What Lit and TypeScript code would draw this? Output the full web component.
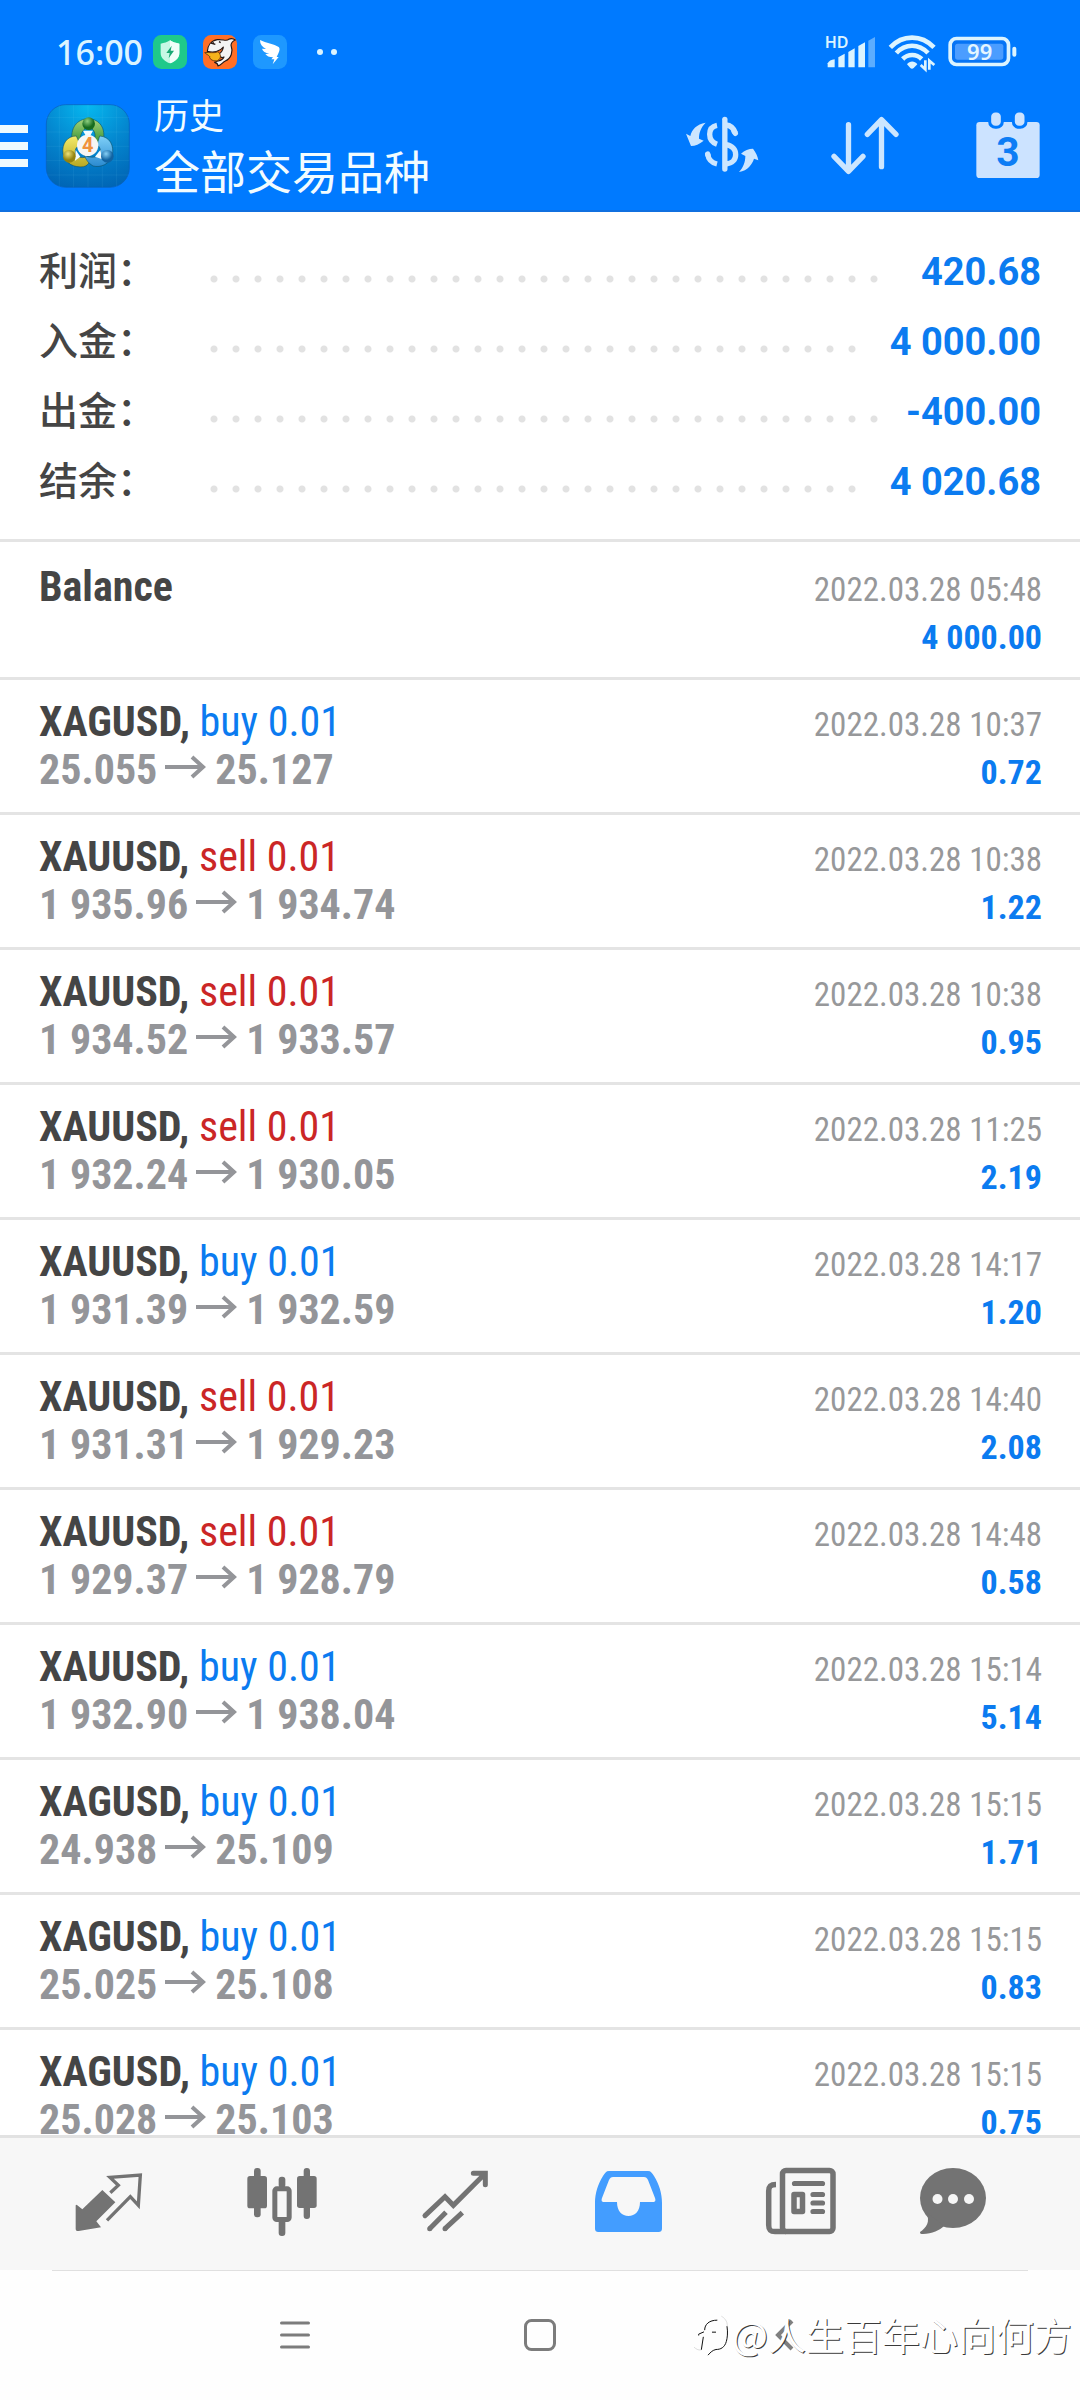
import { LitElement, css, html, nothing, TemplateResult } from "lit";
import { customElement, property, state } from "lit/decorators.js";
import { classMap } from "lit/directives/class-map.js";

interface Deal {
  symbol: string;
  side?: "buy" | "sell";
  volume?: string;
  open?: string;
  close?: string;
  time: string;
  profit: string;
}

const deal = (
  symbol: string,
  side: "buy" | "sell",
  open: string,
  close: string,
  time: string,
  profit: string
): Deal => ({ symbol, side, volume: "0.01", open, close, time: `2022.03.28 ${time}`, profit });

const SUMMARY: [string, string][] = [
  ["利润", "420.68"],
  ["入金", "4 000.00"],
  ["出金", "-400.00"],
  ["结余", "4 020.68"],
];

const DEALS: Deal[] = [
  { symbol: "Balance", time: "2022.03.28 05:48", profit: "4 000.00" },
  deal("XAGUSD", "buy", "25.055", "25.127", "10:37", "0.72"),
  deal("XAUUSD", "sell", "1 935.96", "1 934.74", "10:38", "1.22"),
  deal("XAUUSD", "sell", "1 934.52", "1 933.57", "10:38", "0.95"),
  deal("XAUUSD", "sell", "1 932.24", "1 930.05", "11:25", "2.19"),
  deal("XAUUSD", "buy", "1 931.39", "1 932.59", "14:17", "1.20"),
  deal("XAUUSD", "sell", "1 931.31", "1 929.23", "14:40", "2.08"),
  deal("XAUUSD", "sell", "1 929.37", "1 928.79", "14:48", "0.58"),
  deal("XAUUSD", "buy", "1 932.90", "1 938.04", "15:14", "5.14"),
  deal("XAGUSD", "buy", "24.938", "25.109", "15:15", "1.71"),
  deal("XAGUSD", "buy", "25.025", "25.108", "15:15", "0.83"),
  deal("XAGUSD", "buy", "25.028", "25.103", "15:15", "0.75"),
];

/* ---------- status bar glyphs ---------- */

const shieldIcon = html`<svg class="badge" viewBox="339 30 102 102" aria-hidden="true">
  <rect x="339" y="30" width="102" height="102" rx="25" fill="#1fc98a" />
  <path d="M390 46C398 52 408 54 418 56V84C418 100 404 110 390 115C376 110 362 100 362 84V56C372 54 382 52 390 46Z" fill="#c6f8e4" />
  <path d="M390 46C398 52 408 54 418 56V84C418 100 404 110 390 115Z" fill="#effef8" />
  <path d="M395 62L379 84H389L386 100L402 77H392Z" fill="#17a873" />
</svg>`;

const sharkIcon = html`<svg class="badge" viewBox="489 30 102 102" aria-hidden="true">
  <rect x="489" y="30" width="102" height="102" rx="25" fill="#ff6f26" />
  <path d="M502 79C503 62 513 47 532 44C548 42 560 50 566 43C573 39 582 42 586 45C578 48 574 53 573 60C580 80 574 100 556 108C548 112 544 120 534 123C534 116 528 113 524 112C532 106 546 110 552 96C545 100 538 96 537 86C545 82 549 74 550 66C540 80 520 84 502 79Z" fill="#f4f4f4" stroke="#261a18" stroke-width="3.5" stroke-linejoin="round" />
  <path d="M494 83C508 81 522 86 534 80C542 86 544 98 537 104C528 112 512 106 509 98C512 93 502 90 494 83Z" fill="#f6b21c" stroke="#6b3a10" stroke-width="3" />
  <path d="M513 54L526 58M520 52V60M537 50L542 53" stroke="#261a18" stroke-width="4" fill="none" />
</svg>`;

const wingIcon = html`<svg class="badge" viewBox="639 30 102 102" aria-hidden="true">
  <rect x="639" y="30" width="102" height="102" rx="25" fill="#1e98ff" />
  <path d="M660 45C678 54 702 57 716 66C722 72 717 82 710 96H716L698 118L703 103H694L699 97C688 97 680 93 676 87L688 86C676 84 668 78 666 71L678 72C666 66 660 58 660 45Z" fill="#fff" />
</svg>`;

const signalIcon = html`<svg class="signal" viewBox="464 31 153 105" role="img" aria-label="HD">
  <text x="463" y="69" class="hd">HD</text>
  <g fill="#dcf4ff">
    <path d="M472 128V116C476 110 482 105 493 104V128Z" />
    <path d="M504 128V98L523 87V128Z" />
    <path d="M534 128V82L553 71V128Z" />
    <path d="M564 128V64L584 53V128Z" />
    <path d="M594 128V48L614 37V128Z" opacity=".42" />
  </g>
</svg>`;

const wifiIcon = html`<svg class="wifi" viewBox="650 31 144 105" aria-hidden="true">
  <g fill="none" stroke="#dcf4ff" stroke-width="14">
    <path d="M657 68C694 29 750 29 788 68" />
    <path d="M675 85C702 56 742 56 770 85" />
    <path d="M694 103C710 87 735 87 751 103" />
  </g>
  <path d="M707 119C715 108 730 108 738 119L727 130C724 133 720 133 717 130Z" fill="#dcf4ff" />
  <path d="M762 107V134L748 121M774 135V108L789 121" fill="none" stroke="#dcf4ff" stroke-width="8" />
</svg>`;

const batteryIcon = html`<svg class="battery" viewBox="836 31 207 105" role="img" aria-label="99%">
  <rect x="842.5" y="41.500" width="175" height="78" rx="19" fill="#1565d8" fill-opacity=".25" stroke="#dcf4ff" stroke-width="11" />
  <rect x="857" y="57" width="145" height="48" rx="8" fill="#4b9dff" />
  <rect x="1029" y="66" width="12" height="30" rx="6" fill="#dcf4ff" />
  <text x="931" y="106" text-anchor="middle" class="charge">99</text>
</svg>`;

/* ---------- app bar glyphs ---------- */

const menuIcon = html`<svg class="burger" viewBox="0 0 28 42" aria-hidden="true">
  <path d="M0 4H28M0 21H28M0 38H28" stroke="#eefaff" stroke-width="8" />
</svg>`;

const logo = html`<svg class="logo" viewBox="19 238 252 252" aria-hidden="true">
  <defs>
    <radialGradient id="sky" cx=".5" cy="0" r="1.050">
      <stop offset="0" stop-color="#06b9f0" />
      <stop offset=".5" stop-color="#0488d0" />
      <stop offset="1" stop-color="#0064b4" />
    </radialGradient>
    <linearGradient id="leaf" x2="0" y2="1"><stop stop-color="#a7d47c" /><stop offset="1" stop-color="#2f8f2f" /></linearGradient>
    <linearGradient id="gold" x2="0" y2="1"><stop stop-color="#f4ea68" /><stop offset="1" stop-color="#b8a822" /></linearGradient>
    <linearGradient id="aqua" x2="0" y2="1"><stop stop-color="#7fd0f8" /><stop offset="1" stop-color="#2a8ad0" /></linearGradient>
    <radialGradient id="leafBall" cx=".4" cy=".3"><stop stop-color="#8ed080" /><stop offset="1" stop-color="#176c20" /></radialGradient>
    <radialGradient id="goldBall" cx=".4" cy=".3"><stop stop-color="#eee27a" /><stop offset="1" stop-color="#93830f" /></radialGradient>
    <radialGradient id="aquaBall" cx=".4" cy=".3"><stop stop-color="#86cff6" /><stop offset="1" stop-color="#1163a2" /></radialGradient>
  </defs>
  <rect x="20" y="240" width="249" height="248" rx="58" fill="url(#sky)" stroke="#0a5fb8" stroke-width="2" />
  <path d="M59 242V486M102 240V488M145 240V488M188 240V488M231 242V486M20 279H269M20 322H269M20 365H269M20 408H269M20 451H269" stroke="#9fe2ff" stroke-opacity=".12" stroke-width="2" />
  <g stroke="#0b4a5c" stroke-opacity=".55" stroke-width="3">
    <path d="M98 352C90 310 112 283 146 282C180 283 200 312 190 350C184 364 172 362 164 348C170 328 164 312 146 308C130 312 122 328 122 344Z" fill="url(#leaf)" />
    <path d="M110 334C82 334 66 358 70 386C76 416 102 430 132 426C148 422 154 408 146 394C130 402 116 400 108 388C104 374 110 366 122 362Z" fill="url(#gold)" />
    <path d="M180 334C210 336 224 362 218 392C210 418 184 430 160 424C146 416 138 404 134 392C152 400 170 400 180 388C184 376 182 368 172 360Z" fill="url(#aqua)" />
  </g>
  <path d="M130 318L160 318L150 336H140ZM108 376L122 396L106 408ZM182 376L188 404L166 396Z" fill="#f2fbff" />
  <circle cx="147" cy="297" r="19" fill="url(#leafBall)" />
  <circle cx="89" cy="395" r="19" fill="url(#goldBall)" />
  <circle cx="203" cy="395" r="19" fill="url(#aquaBall)" />
  <circle cx="144" cy="362" r="32" fill="#f6f6f4" />
  <text x="144" y="383" text-anchor="middle" class="four">4</text>
</svg>`;

const dollarIcon = html`<svg class="tool" viewBox="48 255 216 216" aria-hidden="true">
  <g fill="none" stroke="#cce6ff" stroke-width="16">
    <path d="M164.500 283V432" stroke-width="16" stroke-linecap="round" />
    <path d="M141 301C125 304 119 315 119 328C119 343 127 353 141 358" />
    <path d="M168 300C184 301 191 310 196 324" />
    <path d="M192 319L196 325" stroke-linecap="round" />
    <path d="M168 359C187 362 197 374 197 389C197 404 187 415 168 417" />
    <path d="M113 387C115 402 124 413 141 417" />
    <path d="M113 387L114 391" stroke-linecap="round" />
  </g>
  <path d="M107 293C80 297 65 314 61 333L48 326L63 363C76 362 88 358 101 347L87 341C87 323 93 306 107 293Z" fill="#cce6ff" />
  <path d="M207 441C234 437 246 418 252 401L265 406C263 392 257 382 249 371C236 371 224 376 213 386L226 393C226 411 220 428 207 441Z" fill="#cce6ff" />
</svg>`;

const sortIcon = html`<svg class="tool" viewBox="477 255 216 216" aria-hidden="true">
  <path d="M535.500 299V438M492 394L535.500 439L579 394M634.500 425V285M592 328L634.500 284L678 328" fill="none" stroke="#cce6ff" stroke-width="16" stroke-linecap="round" stroke-linejoin="round" />
</svg>`;

const calendarIcon = html`<svg class="tool" viewBox="906 255 216 216" aria-hidden="true">
  <rect x="919" y="291" width="190" height="168" rx="10" fill="#cce3ff" />
  <g fill="#cce3ff" stroke="#007aff" stroke-width="9">
    <rect x="959" y="258" width="38" height="49" rx="17" />
    <rect x="1030" y="258" width="38" height="49" rx="17" />
  </g>
  <text x="1014" y="424" text-anchor="middle" class="day">3</text>
</svg>`;

/* ---------- tab bar glyphs ---------- */

const GREY = "#737373";

const TABS: { label: string; icon: TemplateResult }[] = [
  {
    label: "行情",
    icon: html`<svg class="tab-icon" viewBox="69 84 216 216" aria-hidden="true">
      <path d="M157 150L196 187L139 244L153 262L86 273C80 274 77 271 77 266V196L80 194L97 208Z" fill=${GREY} />
      <path d="M181 158L205 136L180 112L271 105L265 196L241 170L171 241" fill="none" stroke=${GREY} stroke-width="10" />
    </svg>`,
  },
  {
    label: "图表",
    icon: html`<svg class="tab-icon" viewBox="585 84 216 216" aria-hidden="true">
      <g fill=${GREY}>
        <rect x="589" y="108" width="59" height="97" rx="8" />
        <rect x="609" y="84" width="20" height="148" rx="9" />
        <rect x="738" y="108" width="59" height="96" rx="8" />
        <rect x="758" y="84" width="19" height="153" rx="9" />
        <rect x="683" y="110" width="20" height="34" rx="9" />
        <rect x="683" y="236" width="20" height="52" rx="9" />
      </g>
      <rect x="671.500" y="146.500" width="43" height="92" rx="6" fill="none" stroke=${GREY} stroke-width="15" />
    </svg>`,
  },
  {
    label: "交易",
    icon: html`<svg class="tab-icon" viewBox="1104 84 216 216" aria-hidden="true">
      <path d="M1122 227L1182 170L1207 196L1301 102M1267 100H1303V134" fill="none" stroke=${GREY} stroke-width="15" stroke-linecap="round" />
      <path d="M1136 266L1185 217M1182 266L1234 218" fill="none" stroke=${GREY} stroke-width="15" />
      <path d="M1136 266H1136.100M1182 266H1182.100" stroke=${GREY} stroke-width="15" stroke-linecap="round" />
    </svg>`,
  },
  {
    label: "历史",
    icon: html`<svg class="tab-icon" viewBox="-3 -3 72 72" aria-hidden="true">
      <path fill-rule="evenodd" fill="#439dff" d="M14 0H53C56 0 57 2 59 5C64 13 67 22 67 32V57C67 60 66 61 63 61H4C1 61 0 60 0 57V32C0 22 3 13 8 5C10 2 11 0 14 0ZM18 6C16 6 15 7 14 9L7 27C6 30 7 31 9 31H22C22 40 27 45 33.500 45C40 45 45 40 45 31H58C60 31 61 30 60 27L53 9C52 7 51 6 49 6Z" />
    </svg>`,
  },
  {
    label: "新闻",
    icon: html`<svg class="tab-icon" viewBox="-1 0 72 72" aria-hidden="true">
      <g fill="none" stroke=${GREY}>
        <rect x="16.500" y="2.500" width="50.500" height="61" rx="3.500" stroke-width="5.500" />
        <path d="M10 16.500C5 16.500 2.700 18 2.700 23V57C2.700 62 4 63.500 9 63.500H20" stroke-width="5.500" />
        <rect x="28" y="26.500" width="8.500" height="17" stroke-width="5.500" stroke-linejoin="round" />
        <path d="M28.500 15.500H56.500M47 26.500H56.500M47 35H56.500M47 43.500H56.500" stroke-width="5.200" stroke-linecap="round" />
      </g>
    </svg>`,
  },
  {
    label: "信息",
    icon: html`<svg class="tab-icon" viewBox="-3 0 72 72" aria-hidden="true">
      <ellipse cx="33" cy="30" rx="33" ry="30" fill=${GREY} />
      <path d="M6 44C11 54 6 60 0 64C0 66 1 66 3 66C12 66 20 62 24 58Z" fill=${GREY} />
      <g fill="#f6f6f6">
        <circle cx="17.500" cy="31" r="5" />
        <circle cx="33" cy="31" r="5" />
        <circle cx="49" cy="31" r="5" />
      </g>
    </svg>`,
  },
];

const watermarkMark = html`<svg class="mark" viewBox="35 55 105 140" aria-hidden="true">
  <path d="M66 132L60 171M52 128V124L68 117M70 112C70 94 84 82 108 82M92 118H104M137 100C140 120 138 136 135 146C130 164 118 170 104 170C94 172 88 178 80 187" fill="none" stroke="#111" stroke-width="3" />
  <path d="M60 171C50 173 44 168 38 163M120 70C130 76 138 84 138 100" fill="none" stroke="#ccc" stroke-width="2" />
</svg>`;

const priceArrow = html`<svg class="arrow" viewBox="0 0 42 24" role="img" aria-label="→">
  <path d="M0 12H38M27 2L38 12L27 22" fill="none" stroke="#949599" stroke-width="4" />
</svg>`;

@customElement("deal-row")
export class DealRow extends LitElement {
  @property({ attribute: false }) deal!: Deal;

  static styles = css`
    :host {
      display: block;
      padding: 18px 38px 18px 39px;
      border-bottom: 3px solid #e4e4e4;
      font-family: "Roboto Condensed", "Liberation Sans Narrow", Roboto, "Noto Sans CJK SC", sans-serif;
    }
    :host(:first-child) {
      padding-top: 21px;
    }
    .line {
      display: flex;
      justify-content: space-between;
      align-items: baseline;
      height: 48px;
      line-height: 48px;
      white-space: nowrap;
    }
    .title,
    .prices {
      font-size: 42px;
    }
    .title {
      color: #454545;
    }
    .symbol {
      font-weight: 700;
    }
    .buy {
      color: #0b7bf0;
    }
    .sell {
      color: #cb2626;
    }
    .prices {
      font-weight: 700;
      color: #949599;
    }
    /* keeps the baseline of a line that has no prices */
    .prices::before {
      content: "\\200b";
    }
    .arrow {
      display: inline-block;
      width: 42px;
      height: 24px;
      margin: 0 8px;
      vertical-align: 5px;
    }
    .time,
    .profit {
      line-height: 40px;
    }
    .time {
      font-size: 33px;
      color: #97989a;
    }
    .profit {
      font-size: 34px;
      font-weight: 700;
      color: #0b7bf0;
    }
  `;

  render() {
    const d = this.deal;
    return html`
      <div class="line">
        <span class="title">
          <span class="symbol">${d.symbol}${d.side ? "," : nothing}</span>
          ${d.side ? html`<span class=${d.side}>${d.side} ${d.volume}</span>` : nothing}
        </span>
        <time class="time">${d.time}</time>
      </div>
      <div class="line">
        <span class="prices">${d.open ? html`${d.open}${priceArrow}${d.close}` : nothing}</span>
        <span class="profit">${d.profit}</span>
      </div>
    `;
  }
}

@customElement("app-root")
export class AppRoot extends LitElement {
  @state() private tab = 3;

  static styles = css`
    :host {
      display: flex;
      flex-direction: column;
      height: 100vh;
      overflow: hidden;
      background: #fff;
      font-family: Roboto, "Noto Sans CJK SC", sans-serif;
    }
    button {
      display: flex;
      align-items: center;
      justify-content: center;
      margin: 0;
      padding: 0;
      border: 0;
      background: none;
      cursor: pointer;
    }
    svg {
      display: block;
      flex: none;
      overflow: visible;
    }

    .header {
      flex: none;
      background: #007aff;
      border-bottom: 2px solid #1070e0;
    }
    .status {
      display: flex;
      align-items: center;
      justify-content: space-between;
      height: 58px;
      padding: 23px 63px 0 56px;
    }
    .status-left,
    .status-right {
      display: flex;
      align-items: center;
    }
    .status-left {
      gap: 16px;
    }
    .status-right {
      gap: 12px;
    }
    .clock {
      margin-right: -6px;
      font: 500 34px/40px "Noto Sans", sans-serif;
      color: #dcf4ff;
    }
    .badge {
      width: 34px;
      height: 34px;
    }
    .more {
      display: flex;
      gap: 8px;
      margin-left: 14px;
    }
    .more i {
      width: 6px;
      height: 6px;
      border-radius: 50%;
      background: #dcf4ff;
    }
    .signal {
      width: 51px;
      height: 35px;
    }
    .wifi {
      width: 48px;
      height: 35px;
    }
    .battery {
      width: 69px;
      height: 35px;
    }
    .hd {
      font: 600 48px "Noto Sans", sans-serif;
      fill: #dcf4ff;
    }
    .charge {
      font: 600 66px "Noto Sans", sans-serif;
      fill: #e4f6ff;
    }
    .day {
      font: 700 122px Roboto, sans-serif;
      fill: #0d7df5;
    }
    .four {
      font: 700 60px Roboto, sans-serif;
      fill: #f0923c;
    }

    .app-bar {
      display: flex;
      align-items: center;
      height: 129px;
      padding-right: 36px;
    }
    .burger {
      width: 28px;
      height: 42px;
    }
    .logo {
      width: 84px;
      height: 84px;
      margin-left: 18px;
    }
    .titles {
      flex: 1;
      margin-left: 24px;
      color: #f2fcff;
    }
    .caption,
    .heading {
      margin: 0;
      font-weight: 400;
    }
    .caption {
      font-size: 35px;
      line-height: 54px;
    }
    .heading {
      font-size: 46px;
      line-height: 56px;
    }
    .tools {
      display: flex;
      gap: 71px;
    }
    .tool {
      width: 72px;
      height: 72px;
    }

    .summary {
      flex: none;
      margin: 0;
      padding: 25px 39px 22px;
      border-bottom: 3px solid #e4e4e4;
    }
    .sum {
      display: flex;
      align-items: center;
      height: 70px;
    }
    .sum dt,
    .sum dd {
      height: 70px;
      line-height: 70px;
    }
    .sum dt {
      flex: none;
      width: 171px;
      font-size: 39px;
      font-weight: 500;
      color: #454545;
    }
    .sum dd {
      margin: 0;
      font-size: 38px;
      font-weight: 700;
      color: #0b7bf0;
      white-space: nowrap;
    }
    .leader {
      flex: 1;
      min-width: 0;
      margin: 14px 8px 0 0;
    }
    .leader::before {
      content: "";
      display: block;
      width: round(down, 100%, 22px);
      height: 8px;
      background: radial-gradient(circle at 4px 4px, #e2e2e2 3px, transparent 4px) 0 0 / 22px 8px;
    }

    .deals {
      flex: 1;
      min-height: 0;
      overflow: hidden;
    }

    .tabs {
      flex: none;
      display: grid;
      grid-template-columns: repeat(5, 173fr) 132fr;
      height: 132px;
      padding: 0 61px 0 22px;
      border-top: 3px solid #e2e2e2;
      background: #f7f7f7;
    }
    .tab-icon {
      width: 72px;
      height: 72px;
    }

    .system {
      position: relative;
      flex: none;
      display: grid;
      grid-template-columns: repeat(3, 245px);
      justify-content: center;
      height: 130px;
      background: #fefefe;
    }
    .system::before {
      content: "";
      position: absolute;
      top: 0;
      left: 52px;
      right: 52px;
      height: 1px;
      background: #e0e0e0;
    }
    .sys {
      width: 34px;
      height: 34px;
    }
    .watermark {
      position: absolute;
      right: 8px;
      bottom: 38px;
      display: flex;
      align-items: center;
      gap: 4px;
      font: 400 38px/56px "Noto Sans CJK SC", sans-serif;
      color: #fff;
      text-shadow: 1px 1px 0 #3a3a3a;
      white-space: nowrap;
      pointer-events: none;
    }
    .mark {
      width: 35px;
      height: 47px;
    }
  `;

  render() {
    return html`
      <header class="header">
        <div class="status">
          <div class="status-left">
            <span class="clock">16:00</span>
            ${shieldIcon}${sharkIcon}${wingIcon}
            <span class="more"><i></i><i></i></span>
          </div>
          <div class="status-right">${signalIcon}${wifiIcon}${batteryIcon}</div>
        </div>
        <div class="app-bar">
          <button aria-label="菜单">${menuIcon}</button>
          ${logo}
          <div class="titles">
            <p class="caption">历史</p>
            <h1 class="heading">全部交易品种</h1>
          </div>
          <div class="tools">
            <button aria-label="交易品种">${dollarIcon}</button>
            <button aria-label="排序">${sortIcon}</button>
            <button aria-label="日期">${calendarIcon}</button>
          </div>
        </div>
      </header>

      <dl class="summary">
        ${SUMMARY.map(
          ([label, value]) => html`<div class="sum">
            <dt>${label}：</dt>
            <div class="leader"></div>
            <dd>${value}</dd>
          </div>`
        )}
      </dl>

      <main class="deals">${DEALS.map((d) => html`<deal-row .deal=${d}></deal-row>`)}</main>

      <nav class="tabs">
        ${TABS.map(
          (t, i) => html`<button
            class=${classMap({ tab: true, active: i === this.tab })}
            aria-label=${t.label}
            aria-current=${i === this.tab ? "page" : nothing}
            @click=${() => (this.tab = i)}
          >
            ${t.icon}
          </button>`
        )}
      </nav>

      <div class="system">
        <button aria-label="最近任务">
          <svg class="sys" viewBox="0 0 34 34" aria-hidden="true">
            <path d="M3.500 5H30.500M3.500 17H30.500M3.500 29H30.500" stroke="#7c7c7c" stroke-width="3" stroke-linecap="round" />
          </svg>
        </button>
        <button aria-label="主屏幕">
          <svg class="sys" viewBox="0 0 34 34" aria-hidden="true">
            <rect x="2.500" y="2.500" width="29" height="29" rx="6" fill="none" stroke="#7c7c7c" stroke-width="3" />
          </svg>
        </button>
        <button aria-label="返回">
          <svg class="sys" viewBox="0 0 34 34" aria-hidden="true">
            <path d="M24 3L10 17L24 31" fill="none" stroke="#808080" stroke-width="4" />
          </svg>
        </button>
        <div class="watermark">${watermarkMark}<span>@人生百年心向何方</span></div>
      </div>
    `;
  }
}
